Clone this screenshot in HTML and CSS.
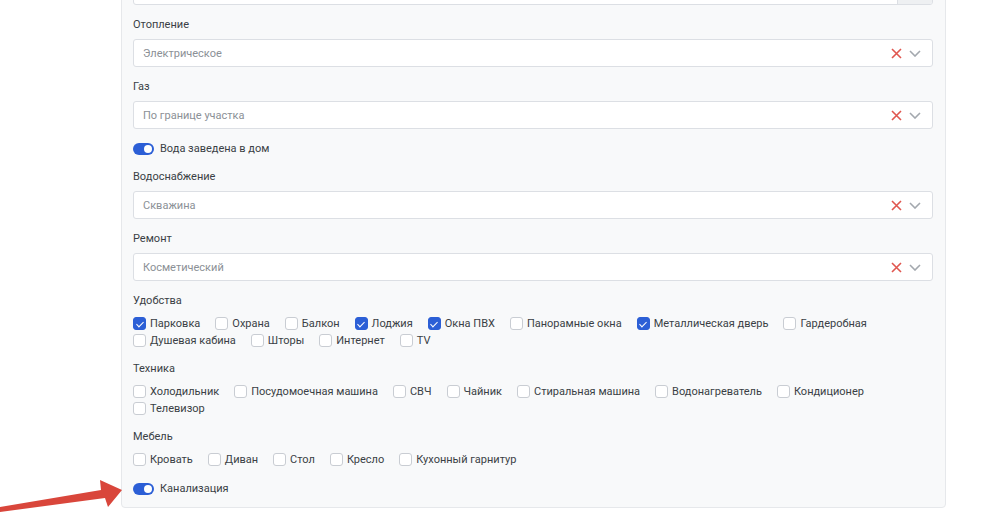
FILE: index.html
```html
<!DOCTYPE html>
<html lang="ru">
<head>
<meta charset="utf-8">
<link rel="stylesheet" href="styles.css">
</head>
<body>
<div class="page">
  <div class="panel">
    <div class="group">
      <div class="input-top"><div class="field"></div><div class="addon"></div></div>
    </div>

    <div class="group">
      <div class="label">Отопление</div>
      <div class="select"><span class="value">Электрическое</span>
        <span class="icons">
          <svg class="clear" width="11" height="11" viewBox="0 0 11 11"><path d="M1 1L10 10M10 1L1 10" stroke="#e0564f" stroke-width="1.6" fill="none"/></svg>
          <svg class="chev" width="12" height="7" viewBox="0 0 12 7"><path d="M1 1L6 6L11 1" stroke="#a3a8ae" stroke-width="1.6" fill="none"/></svg>
        </span>
      </div>
    </div>

    <div class="group">
      <div class="label">Газ</div>
      <div class="select"><span class="value">По границе участка</span>
        <span class="icons">
          <svg class="clear" width="11" height="11" viewBox="0 0 11 11"><path d="M1 1L10 10M10 1L1 10" stroke="#e0564f" stroke-width="1.6" fill="none"/></svg>
          <svg class="chev" width="12" height="7" viewBox="0 0 12 7"><path d="M1 1L6 6L11 1" stroke="#a3a8ae" stroke-width="1.6" fill="none"/></svg>
        </span>
      </div>
    </div>

    <div class="group toggle-group">
      <label class="toggle"><span class="switch"><span class="knob"></span></span><span>Вода заведена в дом</span></label>
    </div>

    <div class="group">
      <div class="label">Водоснабжение</div>
      <div class="select"><span class="value">Скважина</span>
        <span class="icons">
          <svg class="clear" width="11" height="11" viewBox="0 0 11 11"><path d="M1 1L10 10M10 1L1 10" stroke="#e0564f" stroke-width="1.6" fill="none"/></svg>
          <svg class="chev" width="12" height="7" viewBox="0 0 12 7"><path d="M1 1L6 6L11 1" stroke="#a3a8ae" stroke-width="1.6" fill="none"/></svg>
        </span>
      </div>
    </div>

    <div class="group">
      <div class="label">Ремонт</div>
      <div class="select"><span class="value">Косметический</span>
        <span class="icons">
          <svg class="clear" width="11" height="11" viewBox="0 0 11 11"><path d="M1 1L10 10M10 1L1 10" stroke="#e0564f" stroke-width="1.6" fill="none"/></svg>
          <svg class="chev" width="12" height="7" viewBox="0 0 12 7"><path d="M1 1L6 6L11 1" stroke="#a3a8ae" stroke-width="1.6" fill="none"/></svg>
        </span>
      </div>
    </div>

    <div class="group">
      <div class="label">Удобства</div>
      <div class="checks">
        <label class="check"><span class="box on"></span>Парковка</label>
        <label class="check"><span class="box"></span>Охрана</label>
        <label class="check"><span class="box"></span>Балкон</label>
        <label class="check"><span class="box on"></span>Лоджия</label>
        <label class="check"><span class="box on"></span>Окна ПВХ</label>
        <label class="check"><span class="box"></span>Панорамные окна</label>
        <label class="check"><span class="box on"></span>Металлическая дверь</label>
        <label class="check"><span class="box"></span>Гардеробная</label>
        <label class="check"><span class="box"></span>Душевая кабина</label>
        <label class="check"><span class="box"></span>Шторы</label>
        <label class="check"><span class="box"></span>Интернет</label>
        <label class="check"><span class="box"></span>TV</label>
      </div>
    </div>

    <div class="group">
      <div class="label">Техника</div>
      <div class="checks">
        <label class="check"><span class="box"></span>Холодильник</label>
        <label class="check"><span class="box"></span>Посудомоечная машина</label>
        <label class="check"><span class="box"></span>СВЧ</label>
        <label class="check"><span class="box"></span>Чайник</label>
        <label class="check"><span class="box"></span>Стиральная машина</label>
        <label class="check"><span class="box"></span>Водонагреватель</label>
        <label class="check"><span class="box"></span>Кондиционер</label>
        <label class="check"><span class="box"></span>Телевизор</label>
      </div>
    </div>

    <div class="group">
      <div class="label">Мебель</div>
      <div class="checks">
        <label class="check"><span class="box"></span>Кровать</label>
        <label class="check"><span class="box"></span>Диван</label>
        <label class="check"><span class="box"></span>Стол</label>
        <label class="check"><span class="box"></span>Кресло</label>
        <label class="check"><span class="box"></span>Кухонный гарнитур</label>
      </div>
    </div>

    <div class="group toggle-group last">
      <label class="toggle"><span class="switch"><span class="knob"></span></span><span>Канализация</span></label>
    </div>
  </div>

  <svg class="arrow" width="124" height="34" viewBox="0 0 124 34">
    <polygon points="0,27 101,10 100,0 122,10 108,27 105,18 0,32" fill="#d9463b"/>
  </svg>
</div>
</body>
</html>
```

FILE: styles.css
```css
* { box-sizing: border-box; }
html, body { margin: 0; padding: 0; background: #ffffff; }
body {
  font-family: Roboto, "Noto Sans", "Liberation Sans", sans-serif;
  font-size: 11px;
  color: #333840;
  overflow: hidden;
}
.page {
  position: relative;
  display: flow-root;
  width: 1000px;
  height: 519px;
}
.panel {
  margin-left: 121px;
  width: 825px;
  margin-top: -35px;
  background: #f8f9fa;
  border: 1px solid #e6e8eb;
  border-radius: 4px;
  padding: 11px 12px 10px 11px;
}
.group { margin-bottom: 11px; }
.group.last { margin-bottom: 0; }
.input-top {
  display: flex;
  height: 28px;
  border: 1px solid #dcdfe4;
  border-radius: 3px;
  background: #fff;
  overflow: hidden;
}
.input-top .field { flex: 1; }
.input-top .addon { width: 35px; background: #eef0f2; border-left: 1px solid #dcdfe4; }
.label {
  line-height: 16px;
  padding-top: 1px;
  margin-bottom: 6px;
  color: #3a3f45;
}
.select {
  display: flex;
  align-items: center;
  height: 28px;
  background: #fff;
  border: 1px solid #dcdfe4;
  border-radius: 3px;
  padding: 0 11px 0 9px;
}
.select .value { flex: 1; color: #8b9096; padding-top: 1px; }
.icons { display: flex; align-items: center; gap: 7px; }
.toggle-group { padding-top: 1px; }
.toggle-group.last { padding-top: 2px; }
.toggle {
  display: flex;
  align-items: center;
  gap: 6px;
  line-height: 16px;
  color: #3a3f45;
}
.switch {
  width: 21px;
  height: 12px;
  border-radius: 6px;
  background: #2c5fd6;
  position: relative;
  display: inline-block;
}
.knob {
  position: absolute;
  right: 2px;
  top: 2px;
  width: 8px;
  height: 8px;
  border-radius: 50%;
  background: #fff;
}
.checks {
  display: flex;
  flex-wrap: wrap;
  column-gap: 15px;
}
.check {
  display: flex;
  align-items: center;
  gap: 4px;
  height: 17px;
  color: #3a3f45;
}
.box {
  width: 13px;
  height: 13px;
  border: 1px solid #c9cdd3;
  border-radius: 3px;
  background: #fff;
  display: inline-block;
  position: relative;
}
.box.on {
  background: #2c5fd6;
  border-color: #2c5fd6;
}
.box.on::after {
  content: "";
  position: absolute;
  left: 3.5px;
  top: 1.5px;
  width: 3px;
  height: 6px;
  border: solid #fff;
  border-width: 0 1.5px 1.5px 0;
  transform: rotate(45deg);
}
.arrow {
  position: absolute;
  left: 0;
  top: 480px;
}
```
